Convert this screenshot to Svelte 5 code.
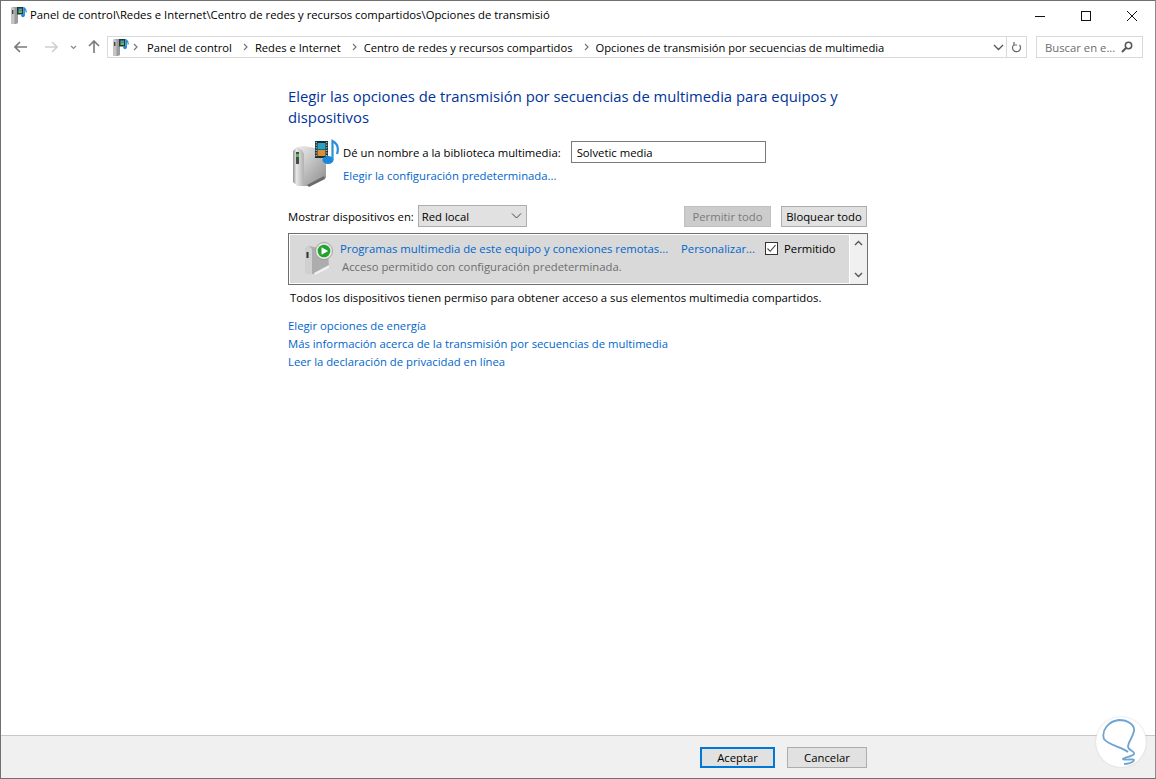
<script>
	const crumbs = ['Panel de control', 'Redes e Internet', 'Centro de redes y recursos compartidos', 'Opciones de transmisión por secuencias de multimedia'];
	const links = ['Elegir opciones de energía', 'Más información acerca de la transmisión por secuencias de multimedia', 'Leer la declaración de privacidad en línea'];
</script>

{#snippet smallIcon()}
	<svg width="16" height="18" viewBox="0 0 16 18">
		<path d="M0 2 L2 1 L6 1 L7 3 V17 L5 18 H1 L0 17 Z" fill="#9c9c9c" />
		<path d="M0 2 L2 1 L3.5 2 V18 H1 L0 17 Z" fill="#c4c4c4" />
		<rect x="1" y="4" width="1.4" height="4" fill="#444" />
		<rect x="6" y="1" width="6.5" height="7.5" fill="#1c3a3a" />
		<rect x="7.5" y="2.5" width="3.5" height="2" fill="#35a7c9" />
		<rect x="7.5" y="4.5" width="3.5" height="2.5" fill="#6fb06a" />
		<circle cx="12" cy="9.5" r="1.8" fill="#1e8ad6" />
		<path d="M13.3 9.5 V2 Q15.6 3.6 15 6.5" fill="none" stroke="#1e8ad6" stroke-width="1.2" />
	</svg>
{/snippet}

<div class="window">
	<header class="titlebar">
		<span class="title-icon">{@render smallIcon()}</span>
		<span class="title">Panel de control\Redes e Internet\Centro de redes y recursos compartidos\Opciones de transmisió</span>
		<div class="controls">
			<svg width="12" height="12" viewBox="0 0 12 12"><path d="M1 6.5 H11" stroke="#111" /></svg>
			<svg width="12" height="12" viewBox="0 0 12 12"><rect x="1.5" y="1.5" width="9" height="9" fill="none" stroke="#111" /></svg>
			<svg width="12" height="12" viewBox="0 0 12 12"><path d="M1 1 L11 11 M11 1 L1 11" stroke="#111" /></svg>
		</div>
	</header>

	<nav class="toolbar">
		<svg class="nav-back" width="14" height="12" viewBox="0 0 14 12"><path d="M1 6 H13 M6 1 L1 6 L6 11" fill="none" stroke="#7a7a7a" stroke-width="1.6" /></svg>
		<svg class="nav-fwd" width="14" height="12" viewBox="0 0 14 12"><path d="M1 6 H13 M8 1 L13 6 L8 11" fill="none" stroke="#d0d0d0" stroke-width="1.6" /></svg>
		<svg class="nav-down" width="7" height="5" viewBox="0 0 7 5"><path d="M1 1 L3.5 3.5 L6 1" fill="none" stroke="#8a8a8a" stroke-width="1.2" /></svg>
		<svg class="nav-up" width="12" height="14" viewBox="0 0 12 14"><path d="M6 13 V1 M1 6 L6 1 L11 6" fill="none" stroke="#7a7a7a" stroke-width="1.6" /></svg>
		<div class="address">
			<span class="addr-icon">{@render smallIcon()}</span>
			{#each crumbs as crumb}
				<svg class="sep" width="5" height="8" viewBox="0 0 5 8"><path d="M1 1 L4 4 L1 7" fill="none" stroke="#777" stroke-width="1.2" /></svg>
				<span class="crumb">{crumb}</span>
			{/each}
			<div class="addr-end">
				<svg class="addr-chevron" width="11" height="7" viewBox="0 0 11 7"><path d="M1 1 L5.5 5.5 L10 1" fill="none" stroke="#555" stroke-width="1.3" /></svg>
				<span class="addr-div"></span>
				<svg width="11" height="13" viewBox="0 0 11 13"><path d="M8.5 4 A4 4 0 1 1 3 3.6 M3 1 V4 H6" fill="none" stroke="#666" stroke-width="1.2" /></svg>
			</div>
		</div>
		<div class="search">
			<span>Buscar en e...</span>
			<svg width="12" height="12" viewBox="0 0 12 12"><circle cx="7.5" cy="4.5" r="3.2" fill="none" stroke="#555" stroke-width="1.5" /><path d="M5 7 L1 11" stroke="#555" stroke-width="2" /></svg>
		</div>
	</nav>

	<main class="content">
		<h1>Elegir las opciones de transmisión por secuencias de multimedia para equipos y dispositivos</h1>

		<div class="library">
			<svg class="big-icon" width="52" height="56" viewBox="0 0 52 56">
				<defs>
					<linearGradient id="face" x1="0" x2="1"><stop offset="0" stop-color="#8f8f8f" /><stop offset=".3" stop-color="#e8e8e8" /><stop offset="1" stop-color="#b0b0b0" /></linearGradient>
					<linearGradient id="body" x1="0" x2="1" y1="0" y2="1"><stop offset="0" stop-color="#f4f4f4" /><stop offset="1" stop-color="#8c8c8c" /></linearGradient>
				</defs>
				<path d="M5 15 L9 11 L16 10 L38 14 L38 42 L19 50 L10 50 L5 46 Z" fill="url(#body)" />
				<path d="M5 15 L9 11 L14 14 L16 18 V50 H10 L5 46 Z" fill="url(#face)" />
				<rect x="8" y="16" width="3" height="12" fill="#4a4a4a" />
				<rect x="8" y="18" width="3" height="3" fill="#49c24e" />
				<path d="M19 49 L36 40 L37 43 L21 51 Z" fill="#6a6a6a" />
				<rect x="27" y="5" width="13" height="17" fill="#17302f" />
				<path d="M28.2 6 V21 M38.8 6 V21" stroke="#e8e8e8" stroke-width="1" stroke-dasharray="1.2 1.4" />
				<rect x="29.5" y="7" width="8" height="6.5" fill="#2c9fc4" />
				<rect x="29.5" y="14" width="8" height="6" fill="#d68f3a" />
				<ellipse cx="40" cy="24" rx="5.5" ry="4" fill="#1b87d8" />
				<path d="M44.5 24 V5 Q52 9 49 18" fill="none" stroke="#2a90dc" stroke-width="2.2" />
			</svg>
			<div class="library-text">
				<div class="name-row">
					<label for="libname">Dé un nombre a la biblioteca multimedia:</label>
					<input id="libname" value="Solvetic media" />
				</div>
				<a class="config">Elegir la configuración predeterminada...</a>
			</div>
		</div>

		<div class="show-row">
			<span>Mostrar dispositivos en:</span>
			<div class="select">
				<span>Red local</span>
				<svg width="11" height="6" viewBox="0 0 11 6"><path d="M1 .5 L5.5 5 L10 .5" fill="none" stroke="#444" /></svg>
			</div>
			<button class="allow" disabled>Permitir todo</button>
			<button class="block">Bloquear todo</button>
		</div>

		<div class="device-list">
			<div class="device">
				<svg class="dev-icon" width="32" height="36" viewBox="0 0 32 36">
					<path d="M1 7 L5 4 L24 8 L25 25 L11 32 H4 L1 29 Z" fill="#adadad" />
					<path d="M1 7 L5 4 L8 7 V32 H4 L1 29 Z" fill="#d0d0d0" />
					<rect x="2.5" y="10" width="2" height="6" fill="#333" />
					<path d="M10 31 L25 23 L25 26 L11 33 Z" fill="#f0f0f0" />
					<circle cx="20" cy="9" r="8.5" fill="#e8e8e8" stroke="#8a8a8a" stroke-width=".7" />
					<circle cx="20" cy="9" r="6.3" fill="#1fa32a" />
					<path d="M17.5 5.3 L24.2 9 L17.5 12.7 Z" fill="#fff" />
				</svg>
				<div class="dev-text">
					<div class="dev-top">
						<a class="dev-name">Programas multimedia de este equipo y conexiones remotas...</a>
						<a class="customize">Personalizar...</a>
						<span class="check">
							<svg width="13" height="13" viewBox="0 0 13 13"><rect x=".5" y=".5" width="12" height="12" fill="#fff" stroke="#333" /><path d="M2.5 6.5 L5.2 9.3 L10.5 3.2" fill="none" stroke="#444" stroke-width="1.1" /></svg>
							Permitido
						</span>
					</div>
					<div class="dev-status">Acceso permitido con configuración predeterminada.</div>
				</div>
			</div>
			<div class="scrollbar">
				<svg width="9" height="6" viewBox="0 0 9 6"><path d="M1 5 L4.5 1.5 L8 5" fill="none" stroke="#555" stroke-width="1.4" /></svg>
				<svg width="9" height="6" viewBox="0 0 9 6"><path d="M1 1 L4.5 4.5 L8 1" fill="none" stroke="#555" stroke-width="1.4" /></svg>
			</div>
		</div>

		<p class="note">Todos los dispositivos tienen permiso para obtener acceso a sus elementos multimedia compartidos.</p>

		<ul class="links">
			{#each links as link}
				<li><a>{link}</a></li>
			{/each}
		</ul>
	</main>

	<footer class="footer">
		<button class="ok">Aceptar</button>
		<button class="cancel">Cancelar</button>
		<div class="watermark">
			<svg width="50" height="50" viewBox="0 0 50 50"><path d="M32 35 C26 30 12 28 8 22 C5 13 13 4 23 3 C32 3 39 8 38 14 C37 20 32 25 32 30 C33 34 39 34 38 37 C36 40 28 40 27 42 C29 44 38 41 38 43 C37 46 31 47 28 47" fill="none" stroke="#6fa4d2" stroke-width="1.8" /></svg>
		</div>
	</footer>
</div>

<style>
	:global(body) {
		margin: 0;
		background: #fff;
	}

	.window {
		width: 1156px;
		height: 779px;
		box-sizing: border-box;
		display: flex;
		flex-direction: column;
		border: 1px solid #707070;
		border-right-color: #8a8a8a;
		font-family: "Open Sans", "Noto Sans", sans-serif;
		font-size: 11.3px;
		color: #000;
		overflow: hidden;
		position: relative;
	}

	.titlebar {
		height: 30px;
		display: flex;
		align-items: center;
		flex: none;
	}

	.title-icon {
		margin-left: 10px;
		width: 19px;
		height: 18px;
		margin-top: -2px;
	}

	.title {
		margin-top: -3px;
	}

	.controls {
		margin-left: auto;
		display: flex;
		gap: 34px;
		margin-right: 17px;
	}

	.toolbar {
		height: 32px;
		display: flex;
		align-items: center;
		flex: none;
	}

	.nav-back { margin-left: 13px; }
	.nav-fwd { margin-left: 16px; }
	.nav-down { margin-left: 12px; }
	.nav-up { margin-left: 11px; }

	.address {
		margin-left: 7px;
		width: 920px;
		height: 22px;
		box-sizing: border-box;
		border: 1px solid #d9d9d9;
		display: flex;
		align-items: center;
	}

	.addr-icon {
		width: 16px;
		height: 18px;
		margin-left: 5px;
	}

	.sep {
		margin: 0 7px 0 6px;
	}

	.addr-icon + .sep {
		margin: 0 9px 0 4px;
	}

	.crumb {
		white-space: nowrap;
		margin-right: 5px;
		font-size: 11.2px;
	}

	.addr-end {
		margin-left: auto;
		display: flex;
		align-items: center;
		gap: 4px;
		height: 100%;
		padding-right: 4px;
	}

	.addr-chevron {
		margin-right: -2px;
	}

	.addr-div {
		width: 1px;
		height: 100%;
		background: #d9d9d9;
	}

	.search {
		margin-left: 9px;
		width: 107px;
		height: 22px;
		box-sizing: border-box;
		border: 1px solid #d9d9d9;
		display: flex;
		align-items: center;
		justify-content: space-between;
		padding: 0 9px 0 8px;
		color: #6d6d6d;
	}

	.content {
		flex: 1;
		padding: 23px 0 0 287px;
		width: 580px;
	}

	h1 {
		font-size: 14.8px;
		font-weight: 400;
		line-height: 21px;
		color: #003399;
		margin: 0 0 13px;
		width: 570px;
	}

	a {
		color: #0066cc;
	}

	.library {
		display: flex;
		height: 55px;
		position: relative;
	}

	.big-icon {
		position: absolute;
		left: 0;
		top: -5px;
	}

	.library-text {
		margin-left: 55px;
	}

	.name-row {
		display: flex;
		align-items: center;
		gap: 10px;
		height: 22px;
	}

	.name-row input {
		width: 195px;
		height: 22px;
		box-sizing: border-box;
		border: 1px solid #7a7a7a;
		padding: 0 5px;
		font: inherit;
		outline: none;
	}

	.config {
		display: block;
		margin-top: 5px;
	}

	.show-row {
		display: flex;
		align-items: center;
		height: 22px;
		margin-top: 9px;
	}

	.select {
		margin-left: 4px;
		width: 109px;
		height: 22px;
		box-sizing: border-box;
		background: #e1e1e1;
		border: 1px solid #adadad;
		display: flex;
		align-items: center;
		justify-content: space-between;
		padding: 0 4px 0 3px;
	}

	button {
		height: 21px;
		box-sizing: border-box;
		background: #e1e1e1;
		border: 1px solid #adadad;
		font: inherit;
		color: #000;
		padding: 0;
	}

	.allow {
		margin-left: auto;
		width: 87px;
		background: #cccccc;
		border-color: #bfbfbf;
		color: #7a7a7a;
	}

	.block {
		margin-left: 10px;
		width: 86px;
		margin-right: 1px;
	}

	.device-list {
		margin-top: 6px;
		width: 580px;
		height: 52px;
		box-sizing: border-box;
		border: 1px solid #6e6e6e;
		display: flex;
		background: #fff;
	}

	.device {
		flex: 1;
		margin: 1px;
		background: #d9d9d9;
		display: flex;
	}

	.dev-icon {
		margin: 7px 0 0 14px;
		flex: none;
	}

	.dev-text {
		margin-left: 4px;
		flex: 1;
	}

	.dev-top {
		display: flex;
		align-items: center;
		height: 14px;
		margin-top: 6px;
	}

	.dev-name {
		width: 341px;
		white-space: nowrap;
	}

	.customize {
		width: 84px;
		white-space: nowrap;
	}

	.check {
		display: flex;
		align-items: center;
		gap: 6px;
		white-space: nowrap;
	}

	.dev-status {
		margin: 4px 0 0 2px;
		color: #6d6d6d;
	}

	.scrollbar {
		width: 17px;
		background: #f0f0f0;
		display: flex;
		flex-direction: column;
		align-items: center;
		justify-content: space-between;
		padding: 6px 0;
		box-sizing: border-box;
	}

	.note {
		margin: 5px 0 0 2px;
	}

	.links {
		list-style: none;
		margin: 12px 0 0;
		padding: 0;
		line-height: 18px;
	}

	.footer {
		height: 42px;
		flex: none;
		background: #f0f0f0;
		border-top: 1px solid #c8c8c8;
		display: flex;
		align-items: center;
		padding-left: 699px;
		gap: 12px;
		position: relative;
	}

	.ok {
		width: 75px;
		height: 21px;
		border: 2px solid #0078d7;
	}

	.cancel {
		width: 80px;
		height: 21px;
	}

	.watermark {
		position: absolute;
		right: 9px;
		top: -19px;
		width: 50px;
		height: 50px;
		border-radius: 50%;
		background: #fff;
		box-shadow: 0 0 2px #ccc;
	}
</style>
